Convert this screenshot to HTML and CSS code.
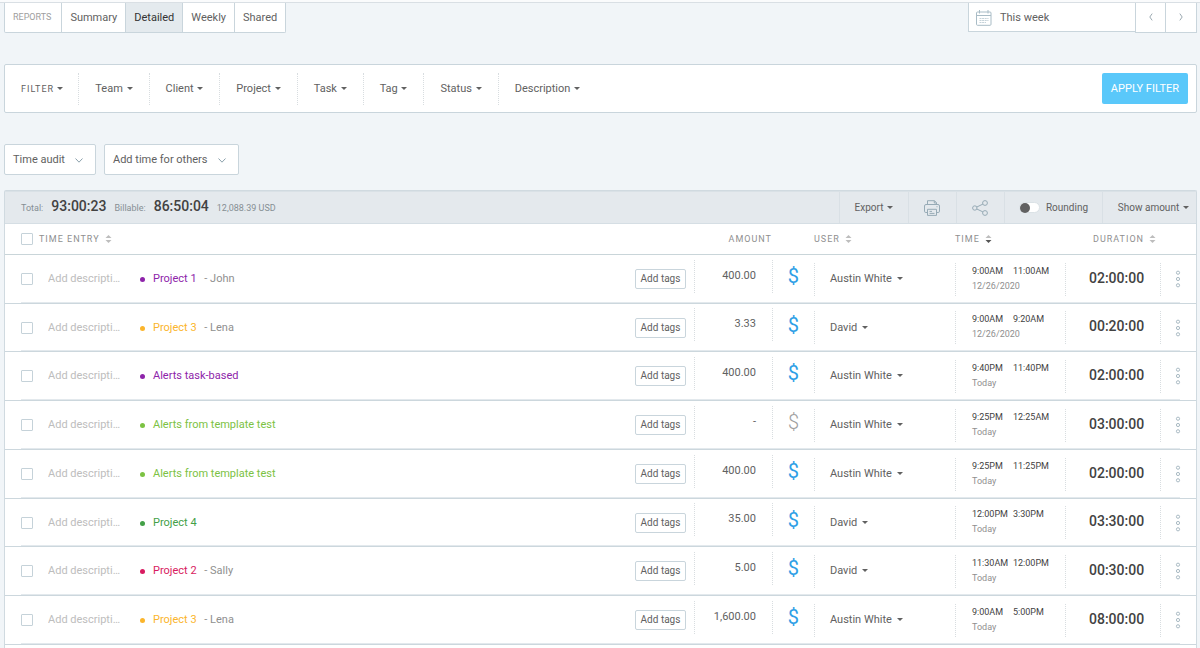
FILE: index.html
```html
<!DOCTYPE html>
<html lang="en">
<head>
<meta charset="utf-8">
<title>Detailed report</title>
<link rel="stylesheet" href="styles.css">
</head>
<body>
<svg class="defs" aria-hidden="true">
  <symbol id="sort" viewBox="0 0 7 8"><path class="up" d="M0.5 3 3.5 0 6.5 3z"/><path class="down" d="M0.5 5 3.5 8 6.5 5z"/></symbol>
  <symbol id="dots" viewBox="0 0 6 18"><g fill="none" stroke="currentColor"><circle cx="3" cy="2.7" r="1.6"/><circle cx="3" cy="9" r="1.6"/><circle cx="3" cy="15.3" r="1.6"/></g></symbol>
  <symbol id="chevron" viewBox="0 0 8 5"><path d="M0.5 0.5 4 4.2 7.5 0.5" fill="none" stroke="currentColor"/></symbol>
</svg>
<header class="topbar">
  <nav class="tabs" aria-label="Reports">
    <span class="tabs-title">REPORTS</span>
    <a href="#summary">Summary</a>
    <a href="#detailed" class="active" aria-current="page">Detailed</a>
    <a href="#weekly">Weekly</a>
    <a href="#shared">Shared</a>
  </nav>
  <div class="period">
    <button class="period-range" type="button">
      <svg width="16" height="16" viewBox="0 0 16 16" fill="none" stroke="#a9bcc6"><rect x="0.5" y="2" width="14.5" height="13.3" rx="1"/><path d="M0.5 5.5H15M3.5 0V3.5M12 0V3.5"/><path d="M3.5 8.5H12.5M3.5 10.5H12.5M3.5 12.5H10" stroke-dasharray="2 0.6" stroke="#c5d2d9"/></svg>
      This week
    </button>
    <button class="period-step" type="button" aria-label="Previous week"><svg width="4" height="8" viewBox="0 0 4 8"><path d="M3.2 0.6 0.8 4 3.2 7.4" fill="none" stroke="#9aa8b0"/></svg></button>
    <button class="period-step" type="button" aria-label="Next week"><svg width="4" height="8" viewBox="0 0 4 8"><path d="M0.8 0.6 3.2 4 0.8 7.4" fill="none" stroke="#9aa8b0"/></svg></button>
  </div>
</header>

<main class="content">
  <section class="filters" aria-label="Filter">
    <button class="filter filter-title" type="button">FILTER <i class="caret"></i></button>
    <button class="filter" type="button">Team <i class="caret"></i></button>
    <button class="filter" type="button">Client <i class="caret"></i></button>
    <button class="filter" type="button">Project <i class="caret"></i></button>
    <button class="filter" type="button">Task <i class="caret"></i></button>
    <button class="filter" type="button">Tag <i class="caret"></i></button>
    <button class="filter" type="button">Status <i class="caret"></i></button>
    <button class="filter" type="button">Description <i class="caret"></i></button>
    <button class="apply" type="button">APPLY FILTER</button>
  </section>

  <div class="actions">
    <button class="action" type="button">Time audit <svg width="8" height="5"><use href="#chevron"/></svg></button>
    <button class="action" type="button">Add time for others <svg width="8" height="5"><use href="#chevron"/></svg></button>
  </div>

  <section class="report">
    <div class="summary">
      <div class="totals">
        <span>Total:</span> <strong>93:00:23</strong>
        <span>Billable:</span> <strong>86:50:04</strong>
        <span class="money">12,088.39 USD</span>
      </div>
      <button class="tool tool-export" type="button">Export <i class="caret"></i></button>
      <button class="tool tool-icon" type="button" aria-label="Print"><svg width="16" height="16" viewBox="0 0 16 16" fill="none" stroke="#97abb6"><path d="M3.5 4.5V0.7H10.5L12.5 2.7V4.5M10.3 0.7V3H12.5"/><path d="M3.5 12.5H1.8Q0.5 12.5 0.5 11.2V6Q0.5 4.5 2 4.5H14Q15.5 4.5 15.5 6V11.2Q15.5 12.5 14.2 12.5H12.5"/><path d="M3.5 9.3H12.5V15.4H3.5zM5.5 11.4H8M5.5 13.4H10.5M12.5 6.7H13.5"/></svg></button>
      <button class="tool tool-icon" type="button" aria-label="Share"><svg width="16" height="16" viewBox="0 0 16 16" fill="none" stroke="#97abb6"><circle cx="2.8" cy="8" r="2.2"/><circle cx="13" cy="3" r="2.4"/><circle cx="13" cy="13" r="2.4"/><path d="M4.8 7 10.9 4.1M4.8 9 10.9 11.9"/></svg></button>
      <label class="tool tool-rounding"><input class="switch" type="checkbox" role="switch"> Rounding</label>
      <button class="tool tool-amount" type="button">Show amount <i class="caret"></i></button>
    </div>

    <table class="entries">
      <colgroup><col class="c-check"><col class="c-desc"><col><col class="c-tags"><col class="c-amount"><col class="c-bill"><col class="c-user"><col class="c-time"><col class="c-duration"><col class="c-menu"></colgroup>
      <thead>
        <tr>
          <th class="check"><input class="box" type="checkbox" aria-label="Select all"></th>
          <th colspan="2">TIME ENTRY <svg class="sort" width="7" height="8"><use href="#sort"/></svg></th>
          <th></th>
          <th class="h-amount">AMOUNT</th>
          <th></th>
          <th>USER <svg class="sort" width="7" height="8"><use href="#sort"/></svg></th>
          <th>TIME <svg class="sort sorted" width="7" height="8"><use href="#sort"/></svg></th>
          <th class="h-duration" colspan="2">DURATION <svg class="sort" width="7" height="8"><use href="#sort"/></svg></th>
        </tr>
      </thead>
      <tbody>
        <tr>
          <td class="check"><input class="box" type="checkbox" aria-label="Select entry"></td>
          <td class="desc"><input type="text" placeholder="Add description" aria-label="Description"></td>
          <td class="project purple"><a href="#p1">Project 1</a> <span>- John</span></td>
          <td class="tags"><button type="button">Add tags</button></td>
          <td class="amount"><div>400.00</div></td>
          <td class="bill"><button type="button" class="on" aria-label="Billable">$</button></td>
          <td class="user"><button type="button">Austin White <i class="caret"></i></button></td>
          <td class="time"><div><p><span>9:00AM</span><span>11:00AM</span></p><p class="date">12/26/2020</p></div></td>
          <td class="duration"><div>02:00:00</div></td>
          <td class="menu"><button type="button" aria-label="More"><svg width="6" height="18"><use href="#dots"/></svg></button></td>
        </tr>
        <tr>
          <td class="check"><input class="box" type="checkbox" aria-label="Select entry"></td>
          <td class="desc"><input type="text" placeholder="Add description" aria-label="Description"></td>
          <td class="project amber"><a href="#p3">Project 3</a> <span>- Lena</span></td>
          <td class="tags"><button type="button">Add tags</button></td>
          <td class="amount"><div>3.33</div></td>
          <td class="bill"><button type="button" class="on" aria-label="Billable">$</button></td>
          <td class="user"><button type="button">David <i class="caret"></i></button></td>
          <td class="time"><div><p><span>9:00AM</span><span>9:20AM</span></p><p class="date">12/26/2020</p></div></td>
          <td class="duration"><div>00:20:00</div></td>
          <td class="menu"><button type="button" aria-label="More"><svg width="6" height="18"><use href="#dots"/></svg></button></td>
        </tr>
        <tr>
          <td class="check"><input class="box" type="checkbox" aria-label="Select entry"></td>
          <td class="desc"><input type="text" placeholder="Add description" aria-label="Description"></td>
          <td class="project purple"><a href="#tb">Alerts task-based</a></td>
          <td class="tags"><button type="button">Add tags</button></td>
          <td class="amount"><div>400.00</div></td>
          <td class="bill"><button type="button" class="on" aria-label="Billable">$</button></td>
          <td class="user"><button type="button">Austin White <i class="caret"></i></button></td>
          <td class="time"><div><p><span>9:40PM</span><span>11:40PM</span></p><p class="date">Today</p></div></td>
          <td class="duration"><div>02:00:00</div></td>
          <td class="menu"><button type="button" aria-label="More"><svg width="6" height="18"><use href="#dots"/></svg></button></td>
        </tr>
        <tr>
          <td class="check"><input class="box" type="checkbox" aria-label="Select entry"></td>
          <td class="desc"><input type="text" placeholder="Add description" aria-label="Description"></td>
          <td class="project lime"><a href="#tt">Alerts from template test</a></td>
          <td class="tags"><button type="button">Add tags</button></td>
          <td class="amount"><div>-</div></td>
          <td class="bill"><button type="button" aria-label="Not billable">$</button></td>
          <td class="user"><button type="button">Austin White <i class="caret"></i></button></td>
          <td class="time"><div><p><span>9:25PM</span><span>12:25AM</span></p><p class="date">Today</p></div></td>
          <td class="duration"><div>03:00:00</div></td>
          <td class="menu"><button type="button" aria-label="More"><svg width="6" height="18"><use href="#dots"/></svg></button></td>
        </tr>
        <tr>
          <td class="check"><input class="box" type="checkbox" aria-label="Select entry"></td>
          <td class="desc"><input type="text" placeholder="Add description" aria-label="Description"></td>
          <td class="project lime"><a href="#tt">Alerts from template test</a></td>
          <td class="tags"><button type="button">Add tags</button></td>
          <td class="amount"><div>400.00</div></td>
          <td class="bill"><button type="button" class="on" aria-label="Billable">$</button></td>
          <td class="user"><button type="button">Austin White <i class="caret"></i></button></td>
          <td class="time"><div><p><span>9:25PM</span><span>11:25PM</span></p><p class="date">Today</p></div></td>
          <td class="duration"><div>02:00:00</div></td>
          <td class="menu"><button type="button" aria-label="More"><svg width="6" height="18"><use href="#dots"/></svg></button></td>
        </tr>
        <tr>
          <td class="check"><input class="box" type="checkbox" aria-label="Select entry"></td>
          <td class="desc"><input type="text" placeholder="Add description" aria-label="Description"></td>
          <td class="project green"><a href="#p4">Project 4</a></td>
          <td class="tags"><button type="button">Add tags</button></td>
          <td class="amount"><div>35.00</div></td>
          <td class="bill"><button type="button" class="on" aria-label="Billable">$</button></td>
          <td class="user"><button type="button">David <i class="caret"></i></button></td>
          <td class="time"><div><p><span>12:00PM</span><span>3:30PM</span></p><p class="date">Today</p></div></td>
          <td class="duration"><div>03:30:00</div></td>
          <td class="menu"><button type="button" aria-label="More"><svg width="6" height="18"><use href="#dots"/></svg></button></td>
        </tr>
        <tr>
          <td class="check"><input class="box" type="checkbox" aria-label="Select entry"></td>
          <td class="desc"><input type="text" placeholder="Add description" aria-label="Description"></td>
          <td class="project pink"><a href="#p2">Project 2</a> <span>- Sally</span></td>
          <td class="tags"><button type="button">Add tags</button></td>
          <td class="amount"><div>5.00</div></td>
          <td class="bill"><button type="button" class="on" aria-label="Billable">$</button></td>
          <td class="user"><button type="button">David <i class="caret"></i></button></td>
          <td class="time"><div><p><span>11:30AM</span><span>12:00PM</span></p><p class="date">Today</p></div></td>
          <td class="duration"><div>00:30:00</div></td>
          <td class="menu"><button type="button" aria-label="More"><svg width="6" height="18"><use href="#dots"/></svg></button></td>
        </tr>
        <tr>
          <td class="check"><input class="box" type="checkbox" aria-label="Select entry"></td>
          <td class="desc"><input type="text" placeholder="Add description" aria-label="Description"></td>
          <td class="project amber"><a href="#p3">Project 3</a> <span>- Lena</span></td>
          <td class="tags"><button type="button">Add tags</button></td>
          <td class="amount"><div>1,600.00</div></td>
          <td class="bill"><button type="button" class="on" aria-label="Billable">$</button></td>
          <td class="user"><button type="button">Austin White <i class="caret"></i></button></td>
          <td class="time"><div><p><span>9:00AM</span><span>5:00PM</span></p><p class="date">Today</p></div></td>
          <td class="duration"><div>08:00:00</div></td>
          <td class="menu"><button type="button" aria-label="More"><svg width="6" height="18"><use href="#dots"/></svg></button></td>
        </tr>
      </tbody>
    </table>
  </section>
</main>
</body>
</html>
```
FILE: styles.css
```css
* { box-sizing: border-box; }
body {
  margin: 0;
  min-height: 100vh;
  display: flex;
  flex-direction: column;
  background: #f1f5f8;
  border-top: 2px solid #fafbfc;
  font: 11px/16px Roboto, "Liberation Sans", sans-serif;
  color: #616161;
}
button, input { font: inherit; color: inherit; margin: 0; }
button { padding: 0; border: 0; background: none; white-space: nowrap; cursor: pointer; }
a { color: inherit; text-decoration: none; }
p { margin: 0; }
.defs { position: absolute; width: 0; height: 0; }
.caret {
  display: inline-block;
  margin-left: 1px;
  vertical-align: 2px;
  border: 3px solid transparent;
  border-top-color: currentColor;
  border-bottom: 0;
}

.topbar {
  display: flex;
  justify-content: space-between;
  align-items: flex-start;
  padding: 0 3px 0 4px;
  border-top: 1px solid #d9dfe4;
}
.tabs {
  display: flex;
  background: #fff;
  border: 1px solid #c9d5dc;
  border-top: 0;
  border-radius: 0 0 2px 2px;
}
.tabs > * { padding: 7px 8px 6px; border-left: 1px solid #c9d5dc; }
.tabs > .tabs-title { padding: 6px 10px 7px 8px; border-left: 0; font-size: 9px; color: #9e9e9e; }
.tabs > .active { background: #e4eaee; color: #333; }
.period { display: flex; align-items: flex-start; }
.period-range {
  display: flex;
  align-items: center;
  gap: 8px;
  width: 167px;
  height: 29px;
  padding: 1px 7px 0;
  background: #fff;
  border: 1px solid #c9d5dc;
  border-width: 0 0 1px 1px;
}
.period-step {
  width: 30px;
  height: 30px;
  background: #fff;
  border: 1px solid #c9d5dc;
  border-width: 0 0 1px 1px;
}
.period-step:last-child { border-right-width: 1px; width: 32px; }

.content {
  flex: 1;
  display: flex;
  flex-direction: column;
  padding: 31px 3px 0 4px;
}
.filters {
  display: flex;
  align-items: center;
  height: 49px;
  padding: 0 8px 0 0;
  background: #fff;
  border: 1px solid #c9d5dc;
  border-radius: 2px;
}
.filter { height: 32px; padding: 0 16px; border-right: 1px dotted #d8dde0; }
.filter:nth-last-child(2) { border-right: 0; }
.filter-title { padding-right: 15px; font-size: 9px; letter-spacing: 1px; }
.filter-title .caret { margin-left: 0; }
.apply {
  height: 31px;
  margin-left: auto;
  padding: 0 9px;
  border-radius: 2px;
  background: #5ac8fa;
  color: #fff;
}
.actions { display: flex; gap: 8px; margin: 31px 0 15px; }
.action {
  display: flex;
  align-items: center;
  gap: 10px;
  height: 31px;
  padding: 0 12px 0 8px;
  background: #fff;
  border: 1px solid #c9d5dc;
  border-radius: 2px;
}
.action svg { color: #8aa0ab; margin-top: 2px; }

.report {
  flex: 1;
  background: #fff;
  border: 1px solid #d0dae0;
  border-bottom: 0;
  border-radius: 2px 2px 0 0;
}
.summary {
  display: flex;
  height: 33px;
  background: #e4e9ed;
  border-top: 1px solid #d9e1e6;
  border-bottom: 1px solid #d5dee4;
}
.totals {
  flex: 1;
  display: flex;
  align-items: baseline;
  gap: 8px;
  padding: 6px 0 0 16px;
  font-size: 9px;
  color: #868f94;
  white-space: nowrap;
}
.totals strong { font-weight: 500; font-size: 14px; color: #424242; }
.tool {
  display: flex;
  align-items: center;
  justify-content: center;
  border-left: 1px solid #d9e0e5;
  font-size: 10px;
}
.tool .caret { margin-left: 4px; }
.tool-export { width: 69px; }
.tool-icon { width: 48px; padding-right: 2px; }
.tool-rounding { width: 98px; gap: 6px; }
.tool-amount { width: 94px; padding-left: 8px; }
.switch {
  appearance: none;
  width: 21px;
  height: 11px;
  border-radius: 6px;
  background: #fff;
  border: 1px solid #dbe2e6;
}
.switch::before {
  content: "";
  display: block;
  width: 10px;
  height: 10px;
  border-radius: 5px;
  background: #616161;
}

.entries { width: 100%; table-layout: fixed; border-collapse: separate; border-spacing: 0; }
.c-check { width: 34px; }
.c-desc { width: 99px; }
.c-tags { width: 68px; }
.c-amount { width: 78px; }
.c-bill { width: 42px; }
.c-user { width: 141px; }
.c-time { width: 110px; }
.c-duration { width: 95px; }
.c-menu { width: 36px; }
.entries th {
  height: 31px;
  padding: 0;
  border-bottom: 1px solid #c9d5d9;
  font-weight: 400;
  font-size: 9px;
  letter-spacing: 1px;
  text-align: left;
  color: #8f8f8f;
}
.entries .h-amount { text-align: right; }
.entries .h-duration { padding-left: 28px; }
.sort { margin-left: 2px; vertical-align: -1px; color: #bdbdbd; }
.sorted { color: #555; }
.up { fill: #bdbdbd; }
.down { fill: currentColor; }
.entries td { height: 49px; padding: 0; border-bottom: 1px solid #ccd7dd; }
.entries tbody tr {
  background: linear-gradient(#e3e9ed, #e3e9ed) 16px calc(100% - 1px) / calc(100% - 32px) 1px no-repeat;
}
.entries tbody tr:nth-child(4n + 2) td { height: 48px; }
.entries .check { padding-left: 16px; }
.box {
  appearance: none;
  display: block;
  width: 12px;
  height: 12px;
  background: #fff;
  border: 1px solid #c5d2d9;
  border-radius: 1px;
}
.desc input {
  display: block;
  width: 73px;
  margin-left: 9px;
  padding: 0;
  border: 0;
  background: none;
  text-overflow: ellipsis;
}
.desc input::placeholder { color: #bdbdbd; }
.project::before {
  content: "";
  display: inline-block;
  width: 5px;
  height: 5px;
  margin: 0 8px 0 2px;
  border-radius: 3px;
  background: currentColor;
}
.project span { margin-left: 5px; color: #8f8f8f; }
.purple { color: #8e24aa; }
.amber { color: #fbb52c; }
.lime { color: #7cc243; }
.green { color: #43a047; }
.pink { color: #d81b60; }
.tags button {
  display: block;
  width: 51px;
  height: 20px;
  margin-left: 9px;
  border: 1px solid #c9d5dc;
  border-radius: 2px;
  background: #fff;
  font-size: 10px;
}
.amount div, .bill button, .user button, .time div, .duration div, .menu button {
  height: 33px;
  border-left: 1px dotted #d8dde0;
}
.amount div, .bill button { margin-bottom: 6px; }
.amount div { padding: 8px 16px 0 0; text-align: right; }
.bill button { display: block; width: 100%; font-size: 20px; font-weight: 300; color: #9e9e9e; }
.bill .on { color: #2f9fe6; font-weight: 400; }
.user button { display: block; width: 100%; padding-left: 15px; text-align: left; }
.user .caret { margin-left: 2px; }
.time div { padding: 1px 0 0 16px; font-size: 9px; line-height: 15px; }
.time p { display: flex; color: #424242; }
.time p span { flex: 0 0 41px; }
.time .date { color: #8f8f8f; }
.duration div { padding: 7px 0 0 23px; font-size: 14px; font-weight: 500; color: #424242; }
.menu button { display: block; width: 100%; color: #aabbc4; }
.menu svg { display: block; margin: 0 auto; }
```
